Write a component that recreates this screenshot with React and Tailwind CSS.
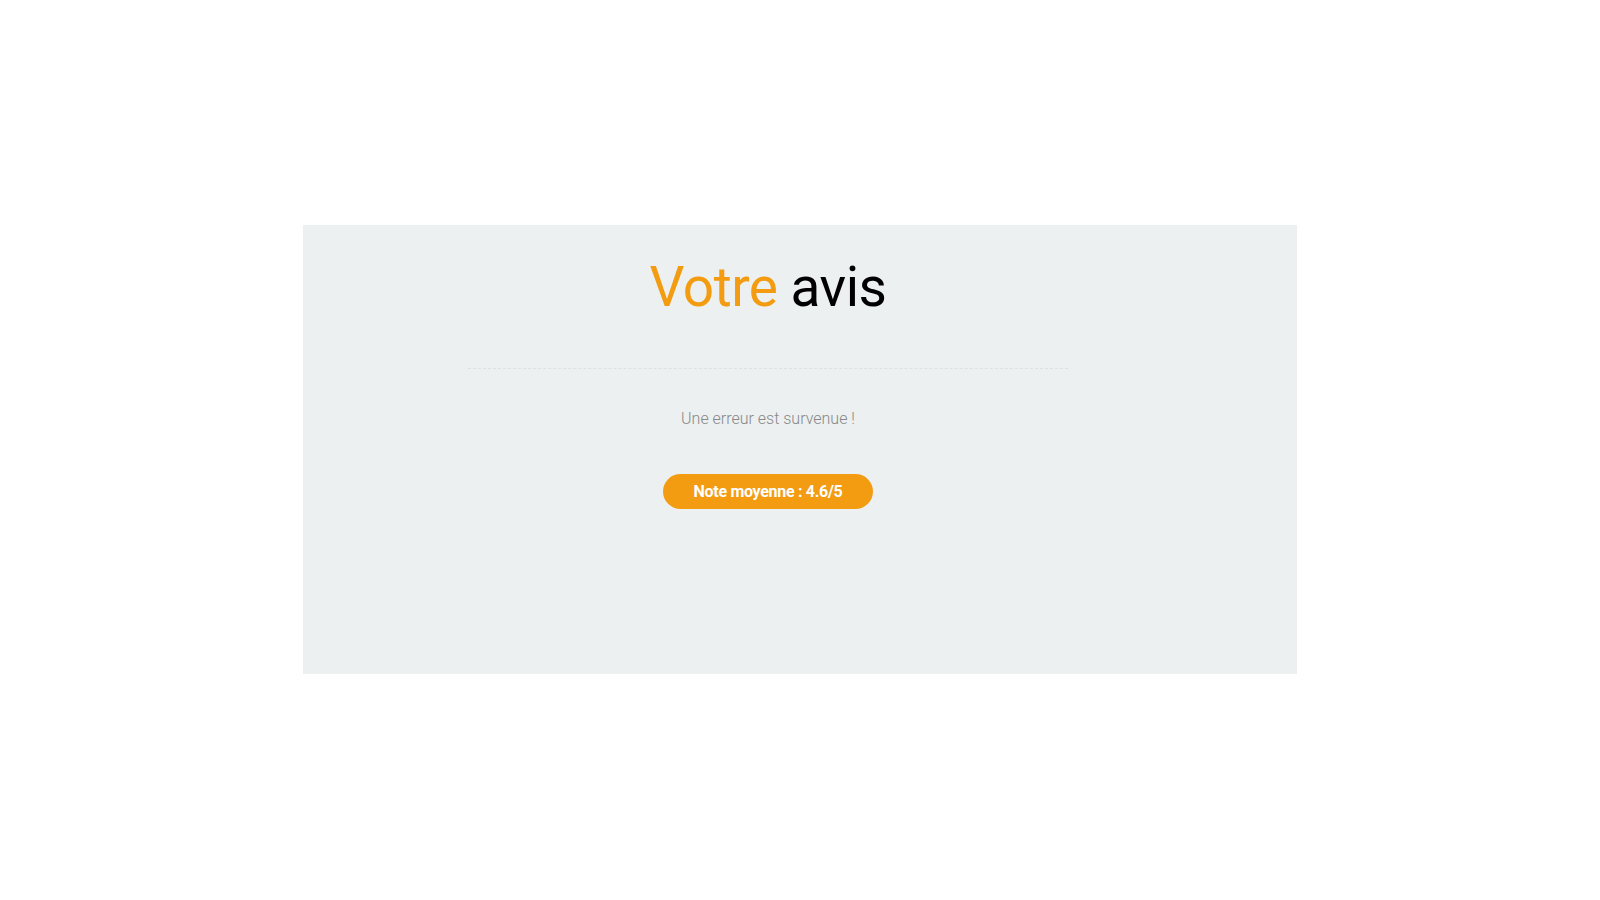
export default function App() {
  return (
    <div className="min-h-[900px] w-full bg-white" style={{ fontFamily: "Roboto, 'Liberation Sans', sans-serif" }}>
      <div className="pt-[225px] pl-[303px]">
        <div className="w-[994px] h-[449px] bg-[#ecf0f1]">
          <div className="ml-[165px] w-[600px] flex flex-col items-center pt-[26px]">
            <h1 className="text-[55px] leading-[72px] font-normal tracking-[-0.5px] text-black">
              <span className="text-[#f39c12]">Votre</span> avis
            </h1>
            <div className="w-full mt-[45px] border-t border-dashed border-[#dde1e2]" />
            <p className="mt-[38px] text-[16px] leading-[24px] font-light text-[#888888]">Une erreur est survenue !</p>
            <div className="mt-[43px] w-[210px] h-[35px] rounded-full bg-[#f39c12] flex items-center justify-center text-white font-bold text-[16px] tracking-[-0.3px]">
              Note moyenne : 4.6/5
            </div>
          </div>
        </div>
      </div>
    </div>
  );
}
